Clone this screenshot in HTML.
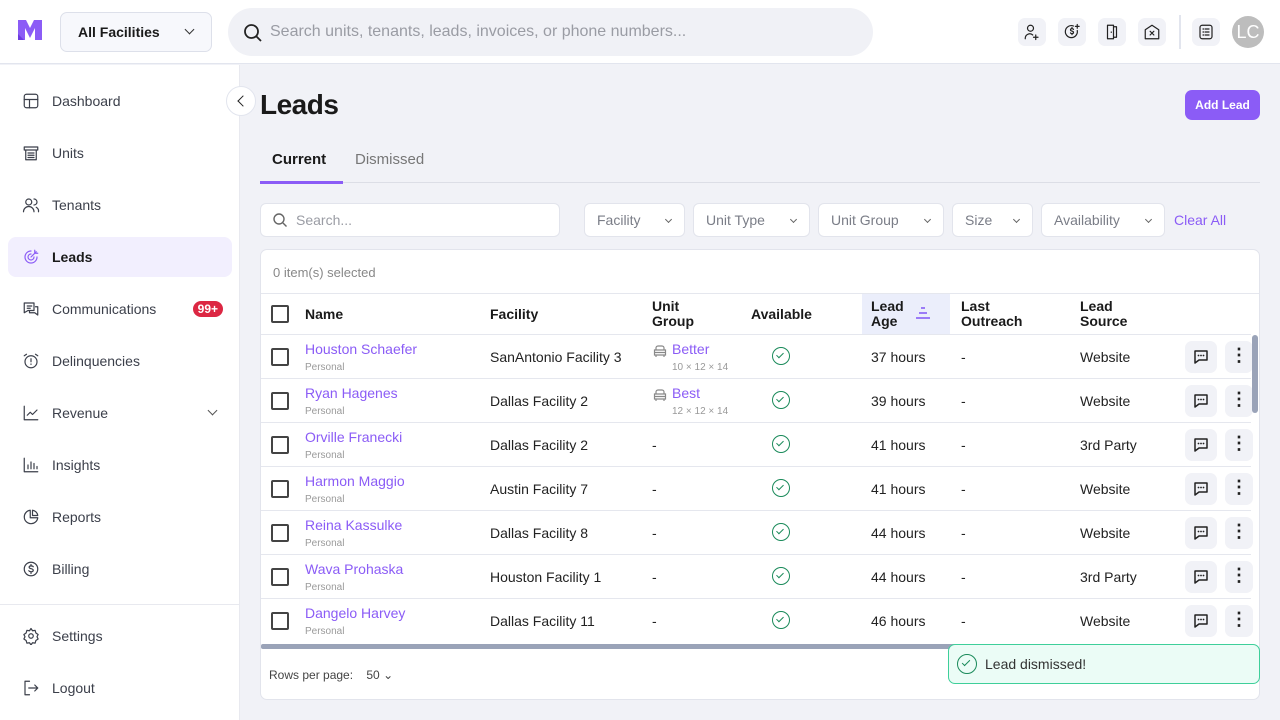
<!DOCTYPE html>
<html><head><meta charset="utf-8"><style>
*{box-sizing:border-box;margin:0;padding:0}
body{width:1280px;height:720px;overflow:hidden;font-family:"Liberation Sans",sans-serif;background:#f1f2f7;position:relative;color:#1a1a1a}
.abs{position:absolute}
.hdr{left:0;top:0;width:1280px;height:64px;background:#fff;border-bottom:1px solid #e2e5ee}
.side{left:0;top:65px;width:240px;height:655px;background:#fff;border-right:1px solid #e8e9ef}
.nav{position:absolute;left:8px;width:224px;height:40px;display:flex;align-items:center;padding-left:14px;font-size:14px;color:#3b3f4a}
.nav svg{width:18px;height:18px;margin-right:12px;fill:none;stroke:#3b3f4a;stroke-width:1.6;stroke-linecap:round;stroke-linejoin:round}
.ib{position:absolute;top:18px;width:28px;height:28px;border-radius:7px;background:#f1f2f7;display:flex;align-items:center;justify-content:center}
.ib svg{width:18px;height:18px;fill:none;stroke:#222;stroke-width:1.6;stroke-linecap:round;stroke-linejoin:round}
.filt{position:absolute;top:203px;height:34px;background:#fff;border:1px solid #e2e4ec;border-radius:6px;font-size:14px;color:#7a7d87;display:flex;align-items:center;padding-left:12px}
.filt.ch:after{content:"";position:absolute;right:13px;top:13px;width:4px;height:4px;border-right:1.3px solid #666;border-bottom:1.3px solid #666;transform:rotate(45deg)}
.cb{position:absolute;left:271px;width:18px;height:18px;border:2px solid #444;border-radius:2px}
.row{position:absolute;left:261px;width:990px;height:44px;border-top:1px solid #e5e7ee;font-size:14px;color:#222}
.row>*{position:absolute}
.row .cb{left:10px;top:13px}
.nm{left:44px;top:6px;color:#8b5cf6;font-size:14px}
.sub{left:44px;top:27px;font-size:10px;color:#9a9a9a}
.t{top:14px}
.ok{left:511px;top:12px;width:18px;height:18px;border:1.6px solid #1a8a5a;border-radius:50%}
.ok:after{content:"";position:absolute;left:5px;top:3px;width:3px;height:6px;border-right:1.6px solid #1a8a5a;border-bottom:1.6px solid #1a8a5a;transform:rotate(45deg)}
.chat{left:924px;top:6px;width:32px;height:32px;background:#f1f2f7;border-radius:7px}
.chat svg{position:absolute;left:7px;top:7px}
.more{left:964px;top:6px;width:28px;height:32px;background:#f1f2f7;border-radius:7px}
.more:after{content:"⋮";position:absolute;left:0;width:28px;text-align:center;top:4px;font-size:18px;font-weight:bold;color:#222}
.ug{left:392px;top:9px}
</style></head><body>
<div class="abs hdr"></div>
<svg class="abs" style="left:18px;top:20px" width="24" height="20" viewBox="0 0 24 20"><path d="M0 0 L8 0 L12 8 L16 0 L24 0 L24 20 L17 20 L17 8 L12 18 L7 8 L7 20 L0 20 Z" fill="#8b5cf6"/><path d="M0 14 L6 20 L0 20Z" fill="#6d3be0"/></svg>
<div class="abs" style="left:60px;top:12px;width:152px;height:40px;border:1px solid #dde0ea;border-radius:7px;background:#f7f8fc;font-size:14px;font-weight:bold;padding:11px 0 0 17px">All Facilities<span style="position:absolute;right:18px;top:13px;width:7px;height:7px;border-right:1.5px solid #333;border-bottom:1.5px solid #333;transform:rotate(45deg)"></span></div>
<div class="abs" style="left:228px;top:8px;width:645px;height:48px;border-radius:24px;background:#f0f1f6;font-size:16px;color:#9a9ca4;padding:15px 0 0 42px">Search units, tenants, leads, invoices, or phone numbers...</div>
<svg class="abs" style="left:243px;top:23px" width="20" height="20" viewBox="0 0 20 20" fill="none" stroke="#222" stroke-width="1.8"><circle cx="8.5" cy="8.5" r="6.5"/><path d="M13.5 13.5 L18 18"/></svg>
<div class="ib" style="left:1018px"><svg viewBox="0 0 24 24"><circle cx="10" cy="7" r="4"/><path d="M3 21v-1a6 6 0 0 1 10-4M17 16v6M14 19h6"/></svg></div>
<div class="ib" style="left:1058px"><svg viewBox="0 0 24 24"><path d="M19 10a8 8 0 1 1-5-6"/><path d="M14 8.5c-.5-.8-1.3-1-2-1-1.2 0-2 .7-2 1.6 0 2.2 4 1.2 4 3.4 0 1-.9 1.7-2 1.7-.8 0-1.600-.3-2-1M12 6v1.5M12 14v1.5M19 2v5M16.5 4.5h5"/></svg></div>
<div class="ib" style="left:1098px"><svg viewBox="0 0 24 24"><path d="M6 3h8v18H6zM14 5h4v14h-4M11 12v.5"/></svg></div>
<div class="ib" style="left:1138px"><svg viewBox="0 0 24 24"><path d="M3 9l9-6 9 6v12H3zM9.5 11l5 5M14.5 11l-5 5"/></svg></div>
<div class="abs" style="left:1179px;top:15px;width:2px;height:34px;background:#e2e5ee"></div>
<div class="ib" style="left:1192px"><svg viewBox="0 0 24 24"><rect x="4" y="3" width="16" height="18" rx="3"/><path d="M8 8h1M11 8h5M8 12h1M11 12h5M8 16h1M11 16h5"/></svg></div>
<div class="abs" style="left:1232px;top:16px;width:32px;height:32px;border-radius:50%;background:#bdbdbd;color:#fff;font-size:18px;text-align:center;line-height:32px">LC</div>

<div class="abs side"></div>
<div class="nav" style="top:81px"><svg viewBox="0 0 24 24"><rect x="3" y="3" width="18" height="18" rx="3"/><path d="M3 10h18M10 10v11"/></svg>Dashboard</div>
<div class="nav" style="top:133px"><svg viewBox="0 0 24 24"><path d="M3 4h18v4H3zM5 8v13h14V8M8 12h8M8 15h8M8 18h8"/></svg>Units</div>
<div class="nav" style="top:185px"><svg viewBox="0 0 24 24"><circle cx="9" cy="8" r="4"/><path d="M2 21a7 7 0 0 1 14 0M16 4a4 4 0 0 1 0 8M19 15a6 6 0 0 1 3 6"/></svg>Tenants</div>
<div class="nav" style="top:237px;background:#f2effe;border-radius:8px;font-weight:bold;color:#1a1a1a"><svg viewBox="0 0 24 24" style="stroke:#8b5cf6"><path d="M20 12a8 8 0 1 1-8-8M16 12a4 4 0 1 1-4-4M12 12l7-7M17 3v4h4"/></svg>Leads</div>
<div class="nav" style="top:289px"><svg viewBox="0 0 24 24"><path d="M3 4h13v10H8l-5 3zM18 9h3v11l-4-3h-7v-3M7 8h6M7 11h4"/></svg>Communications<span style="position:absolute;right:9px;top:12px;background:#dc2743;color:#fff;font-size:12px;font-weight:bold;border-radius:8px;padding:1px 5px">99+</span></div>
<div class="nav" style="top:341px"><svg viewBox="0 0 24 24"><circle cx="12" cy="13" r="8"/><path d="M12 9v4M12 16v.5M3 5l3-2M21 5l-3-2"/></svg>Delinquencies</div>
<div class="nav" style="top:393px"><svg viewBox="0 0 24 24"><path d="M3 3v18h18M7 15l4-4 3 3 6-6"/></svg>Revenue<span style="position:absolute;right:16px;top:14px;width:7px;height:7px;border-right:1.4px solid #555;border-bottom:1.4px solid #555;transform:rotate(45deg)"></span></div>
<div class="nav" style="top:445px"><svg viewBox="0 0 24 24"><path d="M3 3v18h18M8 17v-5M12 17V8M16 17v-7M20 17v-3"/></svg>Insights</div>
<div class="nav" style="top:497px"><svg viewBox="0 0 24 24"><path d="M21 13A9 9 0 1 1 11 3v10z"/><path d="M14 3a8 8 0 0 1 7 7h-7z"/></svg>Reports</div>
<div class="nav" style="top:549px"><svg viewBox="0 0 24 24"><circle cx="12" cy="12" r="9"/><path d="M15 9c-.5-.8-1.5-1.2-3-1.2-1.5 0-2.5.8-2.5 1.8 0 2.6 5.5 1.4 5.5 4 0 1.2-1.2 2-3 2-1.4 0-2.5-.5-3-1.3M12 6v2M12 16v2"/></svg>Billing</div>
<div class="abs" style="left:0;top:604px;width:240px;height:1px;background:#e8e9ef"></div>
<div class="nav" style="top:616px"><svg viewBox="0 0 24 24"><circle cx="12" cy="12" r="3"/><path d="M12 2l2 3 3.5-.5 1 3.5 3 2-1.5 3 1.5 3-3 2-1 3.5-3.5-.5-2 3-2-3-3.5.5-1-3.5-3-2 1.5-3-1.5-3 3-2 1-3.5 3.5.5z"/></svg>Settings</div>
<div class="nav" style="top:668px"><svg viewBox="0 0 24 24"><path d="M10 3H4v18h6M9 12h12M17 8l4 4-4 4"/></svg>Logout</div>
<div class="abs" style="left:226px;top:86px;width:30px;height:30px;border-radius:50%;background:#fff;border:1px solid #e2e5ee"><span style="position:absolute;left:12px;top:10px;width:8px;height:8px;border-left:1.8px solid #222;border-bottom:1.8px solid #222;transform:rotate(45deg)"></span></div>

<div class="abs" style="left:260px;top:89px;font-size:28px;font-weight:bold;letter-spacing:-.5px">Leads</div>
<div class="abs" style="left:1185px;top:90px;width:75px;height:30px;background:#8b5cf6;border-radius:7px;color:#fff;font-size:12px;font-weight:bold;text-align:center;line-height:30px">Add Lead</div>
<div class="abs" style="left:272px;top:151px;font-size:15px;font-weight:bold">Current</div>
<div class="abs" style="left:355px;top:151px;font-size:15px;color:#777">Dismissed</div>
<div class="abs" style="left:260px;top:182px;width:1000px;height:1px;background:#dcdee6"></div>
<div class="abs" style="left:260px;top:181px;width:83px;height:3px;background:#8b5cf6"></div>

<div class="filt" style="left:260px;width:300px;padding-left:35px;color:#9a9ca4">Search...</div>
<svg class="abs" style="left:272px;top:212px" width="16" height="16" viewBox="0 0 16 16" fill="none" stroke="#666" stroke-width="1.4"><circle cx="7" cy="7" r="5"/><path d="M11 11l3.5 3.5"/></svg>
<div class="filt ch" style="left:584px;width:101px">Facility</div>
<div class="filt ch" style="left:693px;width:117px">Unit Type</div>
<div class="filt ch" style="left:818px;width:126px">Unit Group</div>
<div class="filt ch" style="left:952px;width:81px">Size</div>
<div class="filt ch" style="left:1041px;width:124px">Availability</div>
<div class="abs" style="left:1174px;top:212px;font-size:14px;color:#8b5cf6">Clear All</div>

<div class="abs" style="left:260px;top:249px;width:1000px;height:451px;background:#fff;border:1px solid #e2e4ec;border-radius:7px"></div>
<div class="abs" style="left:273px;top:265px;font-size:13px;color:#888">0 item(s) selected</div>
<div class="abs" style="left:261px;top:293px;width:998px;height:1px;background:#e5e7ee"></div>
<div class="abs" style="left:862px;top:294px;width:88px;height:40px;background:#ebeefb"></div>
<div class="cb" style="top:305px"></div>
<div class="abs" style="top:306px;left:305px;font-size:14px;font-weight:bold">Name</div>
<div class="abs" style="top:306px;left:490px;font-size:14px;font-weight:bold">Facility</div>
<div class="abs" style="top:299px;left:652px;font-size:14px;font-weight:bold;line-height:15px">Unit<br>Group</div>
<div class="abs" style="top:306px;left:751px;font-size:14px;font-weight:bold">Available</div>
<div class="abs" style="top:299px;left:871px;font-size:14px;font-weight:bold;line-height:15px">Lead<br>Age</div>
<div class="abs" style="top:307px;left:916px;width:14px;height:12px"><div style="position:absolute;left:5px;top:0;width:4px;height:1.5px;background:#9b7cf7"></div><div style="position:absolute;left:3px;top:5px;width:8px;height:1.5px;background:#9b7cf7"></div><div style="position:absolute;left:0;top:10px;width:14px;height:1.5px;background:#9b7cf7"></div></div>
<div class="abs" style="top:299px;left:961px;font-size:14px;font-weight:bold;line-height:15px">Last<br>Outreach</div>
<div class="abs" style="top:299px;left:1080px;font-size:14px;font-weight:bold;line-height:15px">Lead<br>Source</div>

<svg width="0" height="0" style="position:absolute"><defs>
<symbol id="ch" viewBox="0 0 18 18"><path d="M3 3h12v9H7l-4 3z" fill="none" stroke="#222" stroke-width="1.5" stroke-linejoin="round"/><circle cx="6.5" cy="7.5" r=".9" fill="#222"/><circle cx="9" cy="7.5" r=".9" fill="#222"/><circle cx="11.5" cy="7.5" r=".9" fill="#222"/></symbol>
<symbol id="so" viewBox="0 0 14 14"><path d="M3 6V4a2 2 0 0 1 2-2h4a2 2 0 0 1 2 2v2M1.5 6h11v5h-11zM3 11v2M11 11v2M1.5 8.5h11" fill="none" stroke="#888" stroke-width="1.2"/></symbol>
</defs></svg>

<div class="row" style="top:334px"><div class="cb"></div><div class="nm">Houston Schaefer</div><div class="sub">Personal</div><div class="t" style="left:229px">SanAntonio Facility 3</div><svg class="ug" width="14" height="14"><use href="#so"/></svg><div style="left:411px;top:6px;color:#8b5cf6">Better</div><div style="left:411px;top:27px;font-size:10px;color:#999">10 × 12 × 14</div><div class="ok"></div><div class="t" style="left:610px">37 hours</div><div class="t" style="left:700px">-</div><div class="t" style="left:819px">Website</div><div class="chat"><svg width="18" height="18"><use href="#ch"/></svg></div><div class="more"></div></div>
<div class="row" style="top:378px"><div class="cb"></div><div class="nm">Ryan Hagenes</div><div class="sub">Personal</div><div class="t" style="left:229px">Dallas Facility 2</div><svg class="ug" width="14" height="14"><use href="#so"/></svg><div style="left:411px;top:6px;color:#8b5cf6">Best</div><div style="left:411px;top:27px;font-size:10px;color:#999">12 × 12 × 14</div><div class="ok"></div><div class="t" style="left:610px">39 hours</div><div class="t" style="left:700px">-</div><div class="t" style="left:819px">Website</div><div class="chat"><svg width="18" height="18"><use href="#ch"/></svg></div><div class="more"></div></div>
<div class="row" style="top:422px"><div class="cb"></div><div class="nm">Orville Franecki</div><div class="sub">Personal</div><div class="t" style="left:229px">Dallas Facility 2</div><div class="t" style="left:391px">-</div><div class="ok"></div><div class="t" style="left:610px">41 hours</div><div class="t" style="left:700px">-</div><div class="t" style="left:819px">3rd Party</div><div class="chat"><svg width="18" height="18"><use href="#ch"/></svg></div><div class="more"></div></div>
<div class="row" style="top:466px"><div class="cb"></div><div class="nm">Harmon Maggio</div><div class="sub">Personal</div><div class="t" style="left:229px">Austin Facility 7</div><div class="t" style="left:391px">-</div><div class="ok"></div><div class="t" style="left:610px">41 hours</div><div class="t" style="left:700px">-</div><div class="t" style="left:819px">Website</div><div class="chat"><svg width="18" height="18"><use href="#ch"/></svg></div><div class="more"></div></div>
<div class="row" style="top:510px"><div class="cb"></div><div class="nm">Reina Kassulke</div><div class="sub">Personal</div><div class="t" style="left:229px">Dallas Facility 8</div><div class="t" style="left:391px">-</div><div class="ok"></div><div class="t" style="left:610px">44 hours</div><div class="t" style="left:700px">-</div><div class="t" style="left:819px">Website</div><div class="chat"><svg width="18" height="18"><use href="#ch"/></svg></div><div class="more"></div></div>
<div class="row" style="top:554px"><div class="cb"></div><div class="nm">Wava Prohaska</div><div class="sub">Personal</div><div class="t" style="left:229px">Houston Facility 1</div><div class="t" style="left:391px">-</div><div class="ok"></div><div class="t" style="left:610px">44 hours</div><div class="t" style="left:700px">-</div><div class="t" style="left:819px">3rd Party</div><div class="chat"><svg width="18" height="18"><use href="#ch"/></svg></div><div class="more"></div></div>
<div class="row" style="top:598px"><div class="cb"></div><div class="nm">Dangelo Harvey</div><div class="sub">Personal</div><div class="t" style="left:229px">Dallas Facility 11</div><div class="t" style="left:391px">-</div><div class="ok"></div><div class="t" style="left:610px">46 hours</div><div class="t" style="left:700px">-</div><div class="t" style="left:819px">Website</div><div class="chat"><svg width="18" height="18"><use href="#ch"/></svg></div><div class="more"></div></div>
<div class="abs" style="left:261px;top:644px;width:700px;height:5px;background:#9aa3b8;border-radius:2px"></div>
<div class="abs" style="left:1252px;top:335px;width:6px;height:78px;background:#9aa3b8;border-radius:3px"></div>
<div class="abs" style="left:269px;top:668px;font-size:12px;color:#444">Rows per page: &nbsp;&nbsp;&nbsp;50 ⌄</div>

<div class="abs" style="left:948px;top:644px;width:312px;height:40px;background:#ebfcf6;border:1.5px solid #3ecf9a;border-radius:7px;font-size:14px;color:#333;padding:11px 0 0 36px">Lead dismissed!</div>
<div class="abs" style="left:957px;top:654px;width:20px;height:20px;border:1.6px solid #1a8a5a;border-radius:50%"><span style="position:absolute;left:6px;top:3px;width:4px;height:8px;border-right:1.6px solid #1a8a5a;border-bottom:1.6px solid #1a8a5a;transform:rotate(45deg)"></span></div>
</body></html>
